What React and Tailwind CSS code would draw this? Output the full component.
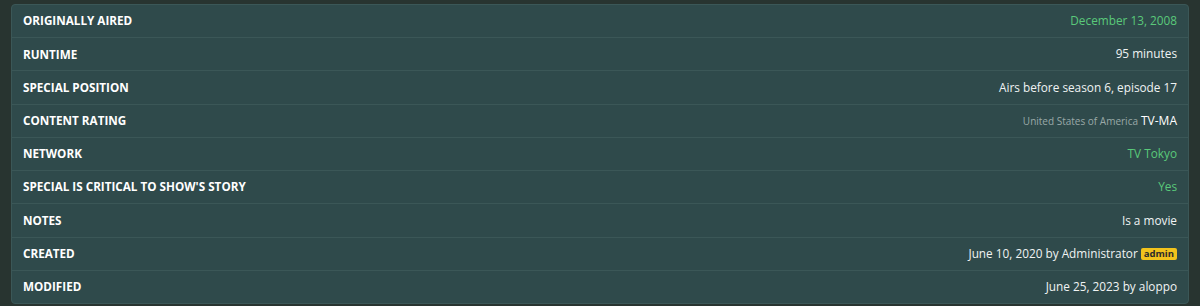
import React from 'react';

const rows = [
  { label: 'Originally Aired', value: <span className="text-[#5ac97a]">December 13, 2008</span> },
  { label: 'Runtime', value: '95 minutes' },
  { label: 'Special Position', value: 'Airs before season 6, episode 17' },
  {
    label: 'Content Rating',
    value: (
      <span className="flex items-baseline gap-[3px]">
        <span className="text-[10px] text-[#9aa9a8]">United States of America</span>
        <span className="text-[12px] text-white">TV-MA</span>
      </span>
    ),
  },
  { label: 'Network', value: <span className="text-[#5ac97a]">TV Tokyo</span> },
  { label: "Special is critical to show's story", value: <span className="text-[#5ac97a]">Yes</span> },
  { label: 'Notes', value: 'Is a movie' },
  {
    label: 'Created',
    value: (
      <span className="flex items-center gap-[3px]">
        June 10, 2020 by Administrator
        <span className="rounded-[2px] bg-[#f2c31c] px-[3px] text-[9.5px] font-bold leading-[12px] text-[#2b2b2b]">admin</span>
      </span>
    ),
  },
  { label: 'Modified', value: 'June 25, 2023 by aloppo' },
];

export default function App() {
  return (
    <div className="h-[306px] w-full bg-[#283430] pl-[11px] pr-[11px] pt-[4px]" style={{ fontFamily: '"Open Sans", sans-serif' }}>
      <div className="flex h-[300px] flex-col overflow-hidden rounded-[4px] border border-[#3b5757] bg-[#2f4a4b]">
        {rows.map((row, i) => (
          <div
            key={i}
            className={`flex flex-1 items-center justify-between px-[11px] ${i > 0 ? 'border-t border-[#3b5757]' : ''}`}
          >
            <span className="text-[11.7px] font-bold uppercase text-white">{row.label}</span>
            <span className="text-[11.8px] text-[#f0f3f3]">{row.value}</span>
          </div>
        ))}
      </div>
    </div>
  );
}
